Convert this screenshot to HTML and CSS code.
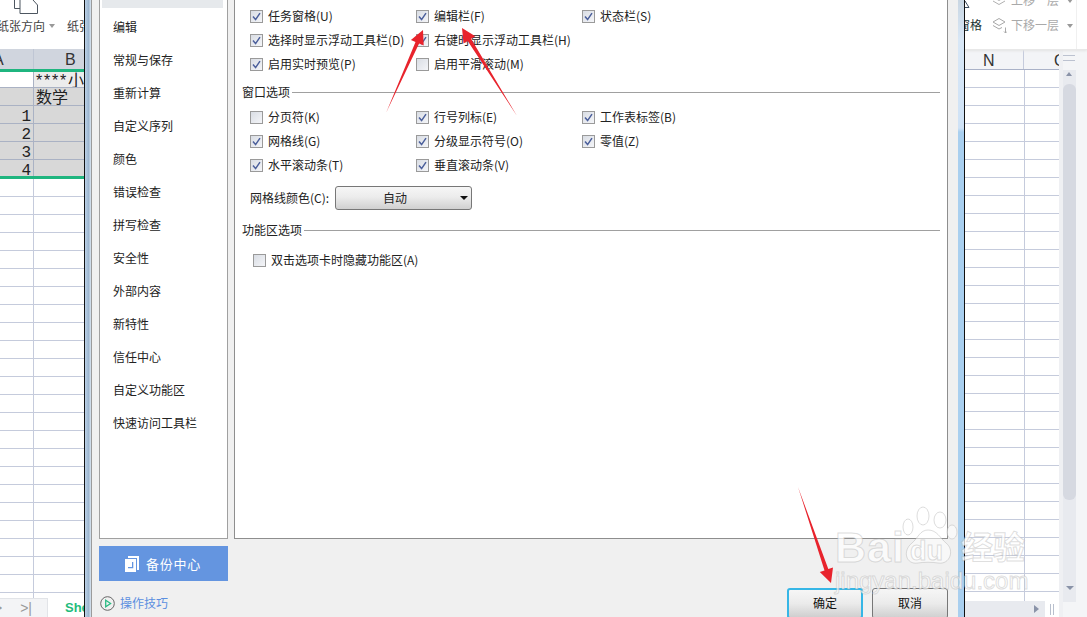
FILE: index.html
```html
<!DOCTYPE html>
<html lang="zh-CN">
<head>
<meta charset="utf-8">
<title>选项</title>
<link rel="stylesheet" href="styles.css">
</head>
<body>
<svg class="defs" width="0" height="0" aria-hidden="true"><symbol id="ck" viewBox="0 0 9 9"><path d="M1 4.500 3.600 7.600 8 1.200" fill="none" stroke="#4b5f9b" stroke-width="1.500"/></symbol></svg>
<div class="app">
  <section class="sheet-left">
    <div class="ribbon-left">
      <svg class="page-icon" width="24" height="14" viewBox="0 0 24 14"><path d="M.5 0V8.500H6M6 0V13.500H23.500V5L19 0" fill="none" stroke="#4d5660" stroke-width="1"/></svg>
      <div class="ribbon-left-labels"><span>纸张方向</span><i class="tri"></i><span class="second">纸张大小</span></div>
    </div>
    <div class="col-head"><span class="ca">A</span><span class="cb-h">B</span></div>
    <div class="green"></div>
    <div class="lrow lrow-a"><span class="acell"></span><span class="bcell">****小数</span></div>
    <div class="lrow lrow-b"><span></span><span class="gcell">数学</span></div>
    <div class="lrow"><span class="num">1</span><span></span></div>
    <div class="lrow"><span class="num">2</span><span></span></div>
    <div class="lrow"><span class="num">3</span><span></span></div>
    <div class="lrow lrow-s"><span class="num">4</span><span></span></div>
    <div class="green"></div>
    <div class="grid-left"></div>
    <div class="tabs-left">
      <div class="tab-nav"><span>&gt;</span><span>&gt;|</span></div>
      <b class="tab-name">She</b>
    </div>
  </section>

  <div class="frame frame-l"></div>

  <main class="dialog">
    <aside class="side">
      <nav class="side-list">
        <div class="sel"></div>
        <a>编辑</a><a>常规与保存</a><a>重新计算</a><a>自定义序列</a><a>颜色</a><a>错误检查</a><a>拼写检查</a><a>安全性</a><a>外部内容</a><a>新特性</a><a>信任中心</a><a>自定义功能区</a><a>快速访问工具栏</a>
      </nav>
      <button class="backup">
        <svg width="16" height="16" viewBox="0 0 16 16"><path d="M4 0H15V14H13V2H4Z" fill="#fff"/><path fill-rule="evenodd" d="M1 3H12V16H1ZM8 6V11H4V12.300H9.300V6Z" fill="#fff"/></svg>
        <span>备份中心</span>
      </button>
      <div class="tips">
        <svg width="15" height="15" viewBox="0 0 15 15"><circle cx="7.500" cy="7.500" r="6.800" fill="none" stroke="#666" stroke-width="1"/><path d="M5.700 4.200 10.600 7.500 5.700 10.800Z" fill="none" stroke="#2dbb84" stroke-width="1.300"/></svg>
        <span>操作技巧</span>
      </div>
    </aside>
    <div class="content">
      <div class="panel">
        <div class="opts first">
          <label class="opt"><i class="box"><svg><use href="#ck"/></svg></i>任务窗格(U)</label>
          <label class="opt"><i class="box"><svg><use href="#ck"/></svg></i>编辑栏(F)</label>
          <label class="opt"><i class="box"><svg><use href="#ck"/></svg></i>状态栏(S)</label>
          <label class="opt"><i class="box"><svg><use href="#ck"/></svg></i>选择时显示浮动工具栏(D)</label>
          <label class="opt"><i class="box"><svg><use href="#ck"/></svg></i>右键时显示浮动工具栏(H)</label>
          <span></span>
          <label class="opt"><i class="box"><svg><use href="#ck"/></svg></i>启用实时预览(P)</label>
          <label class="opt"><i class="box"></i>启用平滑滚动(M)</label>
        </div>
        <h2 class="sect sect-a"><span>窗口选项</span></h2>
        <div class="opts second-block">
          <label class="opt"><i class="box"></i>分页符(K)</label>
          <label class="opt"><i class="box"><svg><use href="#ck"/></svg></i>行号列标(E)</label>
          <label class="opt"><i class="box"><svg><use href="#ck"/></svg></i>工作表标签(B)</label>
          <label class="opt"><i class="box"><svg><use href="#ck"/></svg></i>网格线(G)</label>
          <label class="opt"><i class="box"><svg><use href="#ck"/></svg></i>分级显示符号(O)</label>
          <label class="opt"><i class="box"><svg><use href="#ck"/></svg></i>零值(Z)</label>
          <label class="opt"><i class="box"><svg><use href="#ck"/></svg></i>水平滚动条(T)</label>
          <label class="opt"><i class="box"><svg><use href="#ck"/></svg></i>垂直滚动条(V)</label>
        </div>
        <div class="color-row">
          <span>网格线颜色(C):</span>
          <div class="select"><span>自动</span><i class="sel-tri"></i></div>
        </div>
        <h2 class="sect sect-b"><span>功能区选项</span></h2>
        <label class="opt ribbon-opt"><i class="box"></i>双击选项卡时隐藏功能区(A)</label>
      </div>
      <div class="actions">
        <button class="btn primary">确定</button>
        <button class="btn">取消</button>
      </div>
    </div>
  </main>

  <div class="frame frame-r"></div>

  <section class="sheet-right">
    <div class="ribbon-right">
      <div class="ribbon-right-clip">
        <svg class="sliver" width="5" height="9" viewBox="0 0 5 9"><path d="M0 1 4 7.500H0" fill="none" stroke="#3a4a5c"/></svg>
        <span class="pane-label">窗格</span>
      </div>
      <div class="layers">
        <div class="layer layer-up"><svg width="15" height="17" viewBox="0 0 15 17"><path d="M1 5 7 1.500 13 5 7 8.500ZM1 9 7 12.500 13 9" fill="none" stroke="#b0b0b0"/></svg><span>上移一层</span><i class="tri"></i></div>
        <div class="layer"><svg width="15" height="17" viewBox="0 0 15 17"><path d="M1 5 7 1.500 13 5 7 8.500ZM1 8.500 7 12 10 10.500M13.500 10.500V16M12 14.500 13.500 16 15 14.500" fill="none" stroke="#a8a8a8"/></svg><span>下移一层</span><i class="tri"></i></div>
      </div>
    </div>
    <div class="right-body">
      <div class="right-main">
        <div class="col-head-r"><span class="cn">N</span><span class="co">O</span></div>
        <div class="grid-right"></div>
        <div class="hbar"><i class="h-tri"></i><div class="hsplit"></div></div>
      </div>
      <div class="vbar">
        <div class="vsplit"></div>
        <div class="vtrack"><i class="v-up"></i><div class="thumb"></div><i class="v-down"></i></div>
      </div>
    </div>
  </section>
</div>

<svg class="arrows" width="1087" height="617" viewBox="0 0 1087 617" aria-hidden="true">
  <polygon points="423,30 423.700,45.600 419.100,43.600 386,113 415.500,42 410.900,40" fill="#e8232c"/>
  <polygon points="462,28 475.300,36.200 471.100,38.800 517,116 467.700,41 463.500,43.600" fill="#e8232c"/>
  <polygon points="831,583 833,567.500 828.300,569.100 798,487 824.500,570.500 819.800,572.100" fill="#e8232c"/>
</svg>

<div class="mark">
  <svg class="paw" width="66" height="66" viewBox="0 0 66 66"><g fill="rgba(255,255,255,.55)" stroke="rgba(170,170,170,.4)"><ellipse cx="8" cy="22" rx="5" ry="8"/><ellipse cx="23" cy="11" rx="6" ry="9"/><ellipse cx="40" cy="15" rx="6" ry="8"/><ellipse cx="52" cy="27" rx="5" ry="7"/><path d="M28 25C37 25 40 33 46 38 55 45 50 60 38 58 32 57 24 57 18 58 6 60 2 46 12 38 18 33 20 25 28 25Z"/></g></svg>
  <span class="bai">Bai</span><span class="du">du</span><span class="jy">经验</span>
  <span class="url">jingyan.baidu.com</span>
</div>
</body>
</html>
```

FILE: styles.css
```css
* { box-sizing: border-box; }
html, body { margin: 0; padding: 0; width: 1087px; height: 617px; overflow: hidden; background: #fff; }
body { font: 12px/1.2 "Noto Sans CJK SC", "Liberation Sans", sans-serif; color: #222; position: relative; }
.defs { position: absolute; }
.app { display: grid; grid-template-columns: 85px 7px 866px 7px 122px; height: 617px; }

/* left sheet */
.sheet-left { display: flex; flex-direction: column; height: 617px; border-right: 1px solid #111; overflow: hidden; background: #fff; }
.ribbon-left { height: 49px; flex: none; position: relative; background: #fff; }
.page-icon { display: block; margin-left: 14px; }
.ribbon-left-labels { display: flex; align-items: center; margin: 3px 0 0 -3px; white-space: nowrap; color: #444; height: 18px; }
.ribbon-left-labels .second { margin-left: 12px; }
.tri { display: inline-block; width: 0; height: 0; margin-left: 4px; border: 3px solid transparent; border-top: 4px solid #999; border-bottom: 0; }
.col-head { height: 20px; flex: none; display: grid; grid-template-columns: 33px 1fr; background: #d0d5de; color: #333; font: 16px/21px "Liberation Sans", sans-serif; }
.ca { margin-left: -7px; }
.cb-h { border-left: 1px solid #bfc6d4; padding-left: 31px; }
.green { height: 3px; flex: none; background: #1fb57f; }
.lrow { display: grid; grid-template-columns: 33px 1fr; height: 18px; flex: none; background: #d8d8d8; border-bottom: 1px solid #aab2c4; font: 16px/23px "Liberation Mono", "Noto Sans CJK SC", monospace; color: #222; overflow: hidden; }
.lrow > span:last-child { border-left: 1px solid #aab2c4; }
.lrow-a { height: 16px; background: #fff; }
.bcell { background: #ececec; padding-left: 2px; white-space: nowrap; overflow: hidden; font: 16px/17px "Liberation Sans", "Noto Sans CJK SC", sans-serif; letter-spacing: 1.800px; }
.lrow-s { height: 16px; border-bottom: 0; }
.gcell { padding-left: 2px; font-size: 16px; }
.num { text-align: right; padding-right: 2px; }
.grid-left { flex: 1; background-color: #fff; background-image: repeating-linear-gradient(to bottom, transparent 0, transparent 17px, #c5cbdc 17px, #c5cbdc 18px), linear-gradient(to right, transparent 33px, #c5cbdc 33px, #c5cbdc 34px, transparent 34px); }
.tabs-left { height: 19px; flex: none; display: flex; align-items: center; background: #fff; overflow: hidden; }
.tab-nav { width: 54px; height: 19px; flex: none; background: #f3f4f6; border-right: 1px solid #e2e4e8; border-top: 1px solid #e2e4e8; color: #999; display: flex; justify-content: space-between; padding: 0 15px 0 0; margin-left: -6px; font: 14px/18px "Liberation Sans", sans-serif; }
.tab-name { margin-left: 17px; color: #1fbc7c; font: bold 13px/18px "Liberation Sans", sans-serif; }

/* window frames */
.frame { height: 617px; }
.frame-l { background: linear-gradient(to right, #bcd2e8, #9db6cf 60%, #dbe6f1); border-right: 1px solid #9b9b9b; }
.frame-r { background: linear-gradient(to bottom, #c9d6e2 0, #d8e7f6 40px, #cfe2f6 128px, #a9cfef 132px, #a9cfef 617px); border-right: 1px solid #111; }

/* dialog */
.dialog { display: grid; grid-template-columns: 129px 1fr; column-gap: 6px; padding-left: 7px; background: #f0f0f0; height: 617px; overflow: hidden; }
.side { display: flex; flex-direction: column; }
.side-list { height: 539px; flex: none; background: #fff; border: 1px solid #a0a0a0; border-top: 0; padding: 0 4px 0 2px; }
.sel { height: 8px; background: #e6e9ec; margin-bottom: 2px; }
.side-list a { display: block; height: 33px; line-height: 33px; padding-left: 11px; color: #222; }
.backup { margin-top: 7px; height: 35px; flex: none; border: 0; padding: 0 2px 0 0; display: flex; align-items: center; justify-content: center; gap: 6px; background: #6495e0; color: #fff; font: inherit; font-size: 13px; letter-spacing: .7px; }
.tips { display: flex; align-items: center; gap: 5px; margin: 15px 0 0 1px; color: #5b8fe0; }
.content { display: flex; flex-direction: column; }
.panel { height: 539px; flex: none; width: 714px; background: #fff; border: 1px solid #8e8e8e; border-top: 0; padding: 4px 0 0 7px; }
.opts { display: grid; grid-template-columns: repeat(3, 166px); grid-auto-rows: 24px; padding-left: 8px; }
.second-block { margin-top: 1px; }
.opt { display: flex; align-items: center; gap: 5px; white-space: nowrap; height: 24px; color: #222; }
.box { width: 13px; height: 13px; flex: none; display: block; border: 1px solid #9a9a9a; background: linear-gradient(135deg, #d9dde4, #f4f5f8); padding: 1px; }
.box svg { display: block; width: 9px; height: 9px; }
.sect { display: flex; align-items: center; gap: 2px; height: 24px; margin: 4px 7px 0 0; font: inherit; color: #222; }
.sect::after { content: ""; flex: 1; height: 1px; background: #a0a0a0; }
.sect-b { margin-top: 8px; }
.color-row { display: flex; align-items: center; gap: 6px; height: 24px; margin: 9px 0 0 8px; }
.select { width: 137px; height: 24px; border: 1px solid #777; border-radius: 3px; background: linear-gradient(to bottom, #f6f6f6, #ececec 45%, #d0d0d0); display: flex; align-items: center; position: relative; padding-left: 47px; }
.sel-tri { position: absolute; right: 3px; top: 9px; border: 4px solid transparent; border-top: 4px solid #111; border-bottom: 0; }
.ribbon-opt { margin: 6px 0 0 11px; }
.actions { display: flex; justify-content: flex-end; gap: 9px; margin-top: 49px; width: 714px; }
.btn { width: 76px; height: 31px; flex: none; border: 1px solid #777; border-radius: 3px; font: inherit; color: #111; background: linear-gradient(to bottom, #f6f6f6, #ebebeb 50%, #cfcfcf); padding: 0; }
.primary { border: 2px solid #36b6e6; }

/* right sheet */
.sheet-right { display: flex; flex-direction: column; height: 617px; overflow: hidden; background: #fff; }
.ribbon-right { height: 50px; flex: none; display: flex; background: #fff; border-bottom: 1px solid #e8e8e8; box-shadow: 0 1px 2px #e4e4e4; position: relative; overflow: hidden; }
.ribbon-right-clip { width: 27px; overflow: hidden; flex: none; }
.sliver { display: block; height: 9px; margin-bottom: 9px; }
.pane-label { display: block; margin-left: -7px; white-space: nowrap; color: #233; width: 40px; }
.layers { display: flex; flex-direction: column; color: #a9a9a9; margin-top: -11px; width: 85px; border-right: 1px solid #f0f0f0; height: 61px; }
.layer { display: flex; align-items: center; height: 25px; gap: 4px; white-space: nowrap; }
.layer-up { margin-top: -1px; }
.right-body { flex: 1; display: flex; min-height: 0; }
.right-main { width: 94px; display: flex; flex-direction: column; }
.col-head-r { height: 20px; flex: none; display: grid; grid-template-columns: 59px 1fr; background: #f3f4f7; border-bottom: 1px solid #aab2c8; color: #333; font: 16px/21px "Liberation Sans", sans-serif; overflow: hidden; }
.cn { padding-left: 18px; border-right: 1px solid #c5cbdc; }
.co { padding-left: 30px; }
.grid-right { flex: 1; background-color: #fff; background-image: repeating-linear-gradient(to bottom, transparent 0, transparent 17px, #c5cbdc 17px, #c5cbdc 18px), linear-gradient(to right, transparent 59px, #c5cbdc 59px, #c5cbdc 60px, transparent 60px); }
.hbar { height: 16px; flex: none; display: flex; align-items: center; background: #fff; position: relative; }
.hbar::before { content: ""; width: 80px; height: 16px; background: #e8eaef; }
.h-tri { position: absolute; left: 69px; top: 4px; border: 4px solid transparent; border-left: 5px solid #8a93a8; border-right: 0; }
.hsplit { width: 4px; height: 11px; margin-left: 5px; border-left: 1px solid #b8bfcd; border-right: 1px solid #b8bfcd; }
.vbar { width: 28px; flex: none; background: #f4f5f7; border-left: 4px solid #eff0f3; display: flex; flex-direction: column; }
.vsplit { height: 20px; flex: none; position: relative; }
.vsplit::before { content: ""; position: absolute; left: 0; top: 5px; width: 12px; height: 4px; border-top: 1px solid #bcc2d0; border-bottom: 1px solid #bcc2d0; }
.vtrack { flex: 0 0 532px; width: 13px; background: #e8eaef; position: relative; padding-top: 14px; }
.thumb { height: 416px; background: #d6d9e1; border-radius: 6px; }
.v-up { position: absolute; left: 3px; top: 2px; border: 3px solid transparent; border-bottom: 4px solid #8a93a8; border-top: 0; }
.v-down { position: absolute; left: 3px; bottom: 12px; border: 4px solid transparent; border-top: 4px solid #8a93a8; border-bottom: 0; }

/* overlays */
.arrows { position: absolute; left: 0; top: 0; pointer-events: none; }
.mark { position: absolute; left: 835px; top: 505px; width: 200px; height: 100px; pointer-events: none; font-family: "Liberation Sans", sans-serif; font-weight: bold; color: rgba(255,255,255,.72); -webkit-text-stroke: 1px rgba(170,170,170,.4); }
.mark span { position: absolute; white-space: nowrap; }
.paw { position: absolute; left: 65px; top: 0; }
.bai { left: 0; top: 18px; font-size: 43px; line-height: 48px; letter-spacing: 1px; }
.du { left: 75px; top: 31px; font-size: 27px; line-height: 30px; color: rgba(255,255,255,.85); }
.jy { left: 126px; top: 20px; font: bold 32px/40px "Noto Sans CJK SC", sans-serif; }
.url { left: 0; top: 62px; font-size: 24px; line-height: 28px; font-weight: normal; }
```
